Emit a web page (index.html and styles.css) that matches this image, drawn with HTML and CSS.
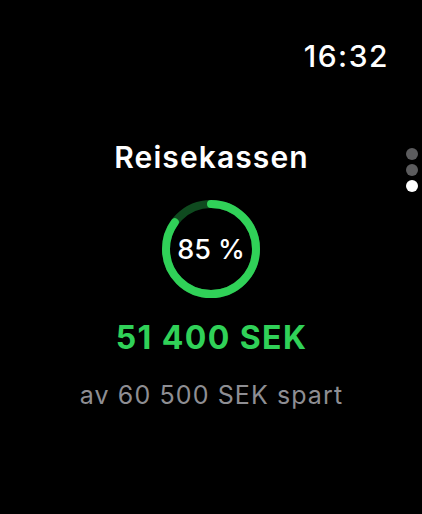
FILE: index.html
```html
<!DOCTYPE html>
<html lang="no">
<head>
<meta charset="utf-8">
<link rel="stylesheet" href="styles.css">
</head>
<body>
<div class="screen">
  <header class="status">
    <span class="time">16:32</span>
  </header>
  <main class="content">
    <h1 class="title">Reisekassen</h1>
    <div class="ring">
      <svg width="98" height="98" viewBox="0 0 98 98">
        <circle cx="49" cy="49" r="45" fill="none" stroke="#0f4a1f" stroke-width="8"/>
        <circle cx="49" cy="49" r="45" fill="none" stroke="#30d158" stroke-width="8" stroke-linecap="round" stroke-dasharray="240.33 282.74" transform="rotate(-90 49 49)"/>
      </svg>
      <span class="percent">85 %</span>
    </div>
    <div class="amount">51 400 SEK</div>
    <div class="sub">av 60 500 SEK spart</div>
  </main>
  <div class="pager">
    <span class="dot"></span>
    <span class="dot"></span>
    <span class="dot active"></span>
  </div>
</div>
</body>
</html>
```
FILE: styles.css
```css
html, body {
  margin: 0;
  padding: 0;
  background: #000;
}
body {
  font-family: Inter, "Liberation Sans", sans-serif;
  color: #fff;
}
.screen {
  position: relative;
  width: 422px;
  height: 514px;
  overflow: hidden;
  display: flex;
  flex-direction: column;
}
.status {
  display: flex;
  justify-content: flex-end;
  padding: 40px 33px 0 0;
}
.time {
  font-size: 30px;
  font-weight: 500;
  line-height: 32px;
  letter-spacing: 1.5px;
}
.content {
  display: flex;
  flex-direction: column;
  align-items: center;
  padding-top: 67px;
}
.title {
  margin: 0;
  font-size: 30px;
  font-weight: 600;
  line-height: 36px;
  letter-spacing: 1.1px;
  padding-left: 1px;
}
.ring {
  position: relative;
  width: 98px;
  height: 98px;
  margin-top: 25px;
}
.ring svg {
  display: block;
}
.percent {
  position: absolute;
  inset: 0;
  display: flex;
  align-items: center;
  justify-content: center;
  font-size: 27px;
  font-weight: 500;
}
.amount {
  margin-top: 21px;
  font-size: 32px;
  font-weight: 700;
  color: #30d158;
  line-height: 38px;
  letter-spacing: 1.4px;
  padding-left: 1px;
}
.sub {
  margin-top: 23px;
  font-size: 25px;
  color: #8e8e93;
  line-height: 30px;
  letter-spacing: 1.1px;
  padding-left: 1px;
}
.pager {
  position: absolute;
  right: 4px;
  top: 148px;
  display: flex;
  flex-direction: column;
  gap: 4px;
}
.dot {
  width: 12px;
  height: 12px;
  border-radius: 50%;
  background: #5c5c5e;
}
.dot.active {
  background: #fff;
}
```
